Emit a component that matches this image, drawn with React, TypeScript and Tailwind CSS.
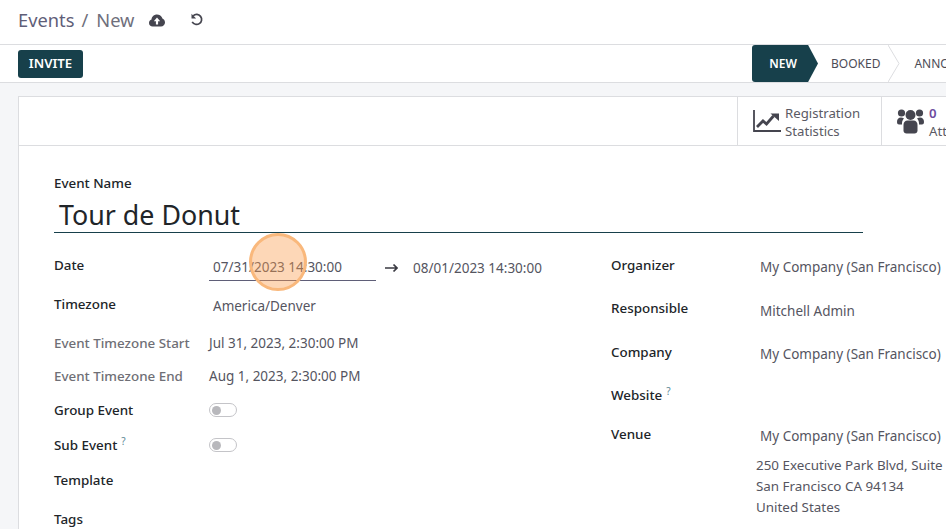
const font = "font-['Noto_Sans',sans-serif]"

function Row({ label, hint, muted, h, valueClass, children }: { label: string; hint?: boolean; muted?: boolean; h: string; valueClass?: string; children?: React.ReactNode }) {
  return (
    <div className={`flex items-start leading-[20px] ${h}`}>
      <div className={`w-[155px] shrink-0 text-[13.4px] font-medium ${muted ? "text-[#6f6f76]" : "text-[#212529]"}`}>
        {label}
        {hint && <sup className="ml-1 text-[10px] font-normal text-[#5b8a96]">?</sup>}
      </div>
      <div className={`text-[13.5px] text-[#55555f] ${valueClass ?? ""}`}>{children}</div>
    </div>
  )
}

function Toggle() {
  return (
    <div className="mt-[3px] flex h-[14px] w-[28px] items-center rounded-full border border-[#c4c4c8] bg-white px-[2px]">
      <div className="h-[9px] w-[9px] rounded-full bg-[#b8b8bc]" />
    </div>
  )
}

export default function App() {
  return (
    <div className={`relative h-[529px] w-[946px] overflow-hidden bg-[#f5f6f8] ${font}`}>
      {/* breadcrumb */}
      <div className="flex h-[45px] items-center border-b border-[#dcdde0] bg-white pb-[4px] pl-[18px]">
        <span className="text-[18.300px] text-[#5f5e78]">Events</span>
        <span className="ml-[7px] text-[18.300px] text-[#6f6f7c]">/</span>
        <span className="ml-[8px] text-[18.300px] text-[#6f6f7c]">New</span>
        <svg className="ml-[15px]" width="16" height="13" viewBox="0 0 16 13">
          <path fillRule="evenodd" fill="#45454f" d="M3.600 12.500C1.600 12.500 0 11 0 9c0-1.600 1-2.900 2.500-3.400C2.600 2.800 5 .5 8 .5c2.200 0 4 1.200 5 3 .3 .6-.1 .6 .5 .9C15 5 16 6.600 16 8.500c0 2.200-1.800 4-4 4zM8 3.600L4.800 7.300h2.100v3.200h2.200V7.300h2.100z" />
        </svg>
        <svg className="ml-[25px]" width="14" height="14" viewBox="0 0 14 14" fill="none" stroke="#45454f" strokeWidth="1.700">
          <path d="M3.200 2.800A5 5 0 1 1 2.200 8.800" />
          <path fill="#45454f" stroke="none" d="M1.500 .8v4.600h4.600z" />
        </svg>
      </div>

      {/* control bar */}
      <div className="flex h-[38px] items-center justify-between border-b border-[#dcdde0] bg-white pl-[18px]">
        <button className="flex h-[28px] w-[65px] items-center justify-center rounded-[3px] bg-[#17404b] text-[13.200px] font-semibold text-white">INVITE</button>
        <div className="flex h-[37px] w-[194px] shrink-0 items-center overflow-hidden text-[12px]">
          <div className="relative flex h-[37px] w-[66px] shrink-0 items-center justify-center rounded-l-[3px] bg-[#17404b] font-semibold text-white [clip-path:polygon(0_0,85%_0,100%_50%,85%_100%,0_100%)]">
            <span className="-ml-[4px]">NEW</span>
          </div>
          <span className="ml-[13px] text-[#4c4c56]">BOOKED</span>
          <svg className="ml-[8px] shrink-0" width="12" height="37" viewBox="0 0 12 37" fill="none" stroke="#dcdde0"><path d="M0 0l11 18.500L0 37" /></svg>
          <span className="ml-[14px] text-[#4c4c56]">ANNOUNCED</span>
        </div>
      </div>

      {/* sheet */}
      <div className="ml-[18px] mt-[13px] w-[1000px] border border-[#dcdde0] bg-white">
        <div className="flex h-[49px] border-b border-[#dcdde0] pl-[718px]">
          <div className="flex w-[144px] shrink-0 items-center border-l border-[#dcdde0] pl-[15px]">
            <svg width="28" height="24" viewBox="0 0 28 24" fill="none">
              <path d="M1 1v21h27" stroke="#45454f" strokeWidth="1.800" />
              <path d="M4 18l6-6 3.500 3 7-8" stroke="#45454f" strokeWidth="2.800" />
              <path d="M17.500 4.500h8.500V12z" fill="#45454f" />
            </svg>
            <div className="ml-[4px] pt-[2px] text-[13.200px] leading-[18px] text-[#5a5a64]">Registration<br />Statistics</div>
          </div>
          <div className="flex w-[145px] shrink-0 items-center border-l border-[#dcdde0] pl-[15px]">
            <svg width="27" height="25" viewBox="0 0 27 25" fill="#45454f">
              <circle cx="4.500" cy="4" r="3.600" />
              <circle cx="22.500" cy="4" r="3.600" />
              <circle cx="13.500" cy="6" r="5" />
              <path d="M0 13c0-3 1.500-4.500 4-4.500 1 0 2 .3 3 1-1.300 1.300-2 3-2 5v1H2c-1.200 0-2-.8-2-2.500z" />
              <path d="M27 13c0-3-1.500-4.500-4-4.500-1 0-2 .3-3 1 1.300 1.300 2 3 2 5v1h3c1.200 0 2-.8 2-2.500z" />
              <path d="M6.500 16c0-3 1.700-4.500 4-4.500h6c2.300 0 4 1.500 4 4.500v5.500c0 2-1.300 3-3 3h-8c-1.700 0-3-1-3-3z" />
            </svg>
            <div className="ml-[5px] pt-[2px] text-[13.200px] leading-[18px] text-[#5a5a64]">
              <div className="font-semibold text-[#6d4c9f]">0</div>
              Attendees
            </div>
          </div>
        </div>

        <div className="pl-[35px] pt-[28px]">
          <div className="text-[13.400px] font-medium leading-[18px] text-[#212529]">Event Name</div>
          <div className="h-[41px] w-[809px] border-b border-[#17404b] pl-[5px] pt-[5px] text-[26.800px] leading-[36px] text-[#212529]">Tour de Donut</div>

          <div className="mt-[22px] flex">
            <div className="w-[557px] shrink-0">
              <Row label="Date" h="h-[39px]">
                <div className="flex items-center pt-[2px]">
                  <div className="w-[167px] border-b border-[#5f5e78] pb-[3px] pl-[4px]">07/31/2023 14:30:00</div>
                  <svg className="-mt-[3px] ml-[9px]" width="13" height="10" viewBox="0 0 13 10" fill="none" stroke="#3a3a42" strokeWidth="1.700"><path d="M0 5h12M8.500 1.500L12 5 8.500 8.500" /></svg>
                  <div className="-mt-[3px] ml-[15px]">08/01/2023 14:30:00</div>
                </div>
              </Row>
              <Row label="Timezone" h="h-[39px]"><span className="block pl-[4px] pt-[2px]">America/Denver</span></Row>
              <Row label="Event Timezone Start" muted h="h-[33px]">Jul 31, 2023, 2:30:00 PM</Row>
              <Row label="Event Timezone End" muted h="h-[34px]">Aug 1, 2023, 2:30:00 PM</Row>
              <Row label="Group Event" h="h-[35px]"><Toggle /></Row>
              <Row label="Sub Event" hint h="h-[35px]"><Toggle /></Row>
              <Row label="Template" h="h-[39px]" />
              <Row label="Tags" h="h-[20px]" />
            </div>
            <div className="shrink-0">
              <Row label="Organizer" h="h-[43px]" valueClass="-ml-[6px] pt-[2px]"><span className="whitespace-nowrap">My Company (San Francisco)</span></Row>
              <Row label="Responsible" h="h-[44px]" valueClass="-ml-[6px] pt-[3px]">Mitchell Admin</Row>
              <Row label="Company" h="h-[43px]" valueClass="-ml-[6px] pt-[2px]"><span className="whitespace-nowrap">My Company (San Francisco)</span></Row>
              <Row label="Website" hint h="h-[39px]" />
              <Row label="Venue" h="h-[31px]" valueClass="-ml-[6px] pt-[2px]"><span className="whitespace-nowrap">My Company (San Francisco)</span></Row>
              <div className="ml-[145px] whitespace-nowrap text-[13.400px] leading-[21px] text-[#55555f]">
                250 Executive Park Blvd, Suite 3400<br />San Francisco CA 94134<br />United States
              </div>
            </div>
          </div>
        </div>
      </div>

      {/* click marker */}
      <div className="absolute left-[249px] top-[233px] h-[58px] w-[58px] rounded-full border-[3px] border-[#f9b87c] bg-[#fb9a4b]/40" />
    </div>
  )
}
